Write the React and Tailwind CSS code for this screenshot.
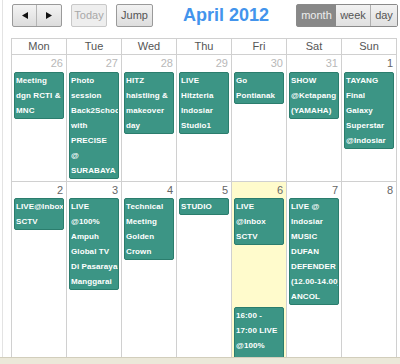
import React from "react";

const DAYS = ["Mon", "Tue", "Wed", "Thu", "Fri", "Sat", "Sun"];

// each event is a list of lines, wrapped the way the calendar shows them
const WEEKS = [
	{
		height: "h-[127px]",
		numH: "h-[17px]",
		cells: [
			{ day: 26, other: true, events: [["Meeting", "dgn RCTI &", "MNC"]] },
			{
				day: 27,
				other: true,
				events: [
					["Photo", "session", "Back2School", "with", "PRECISE", "@", "SURABAYA"],
				],
			},
			{
				day: 28,
				other: true,
				events: [["HITZ", "haistling &", "makeover", "day"]],
			},
			{
				day: 29,
				other: true,
				events: [["LIVE", "Hitzteria", "Indosiar", "Studio1"]],
			},
			{ day: 30, other: true, events: [["Go", "Pontianak"]] },
			{ day: 31, other: true, events: [["SHOW", "@Ketapang", "(YAMAHA)"]] },
			{
				day: 1,
				events: [["TAYANG", "Final", "Galaxy", "Superstar", "@Indosiar"]],
			},
		],
	},
	{
		height: "h-[200px]",
		numH: "h-[16px]",
		cells: [
			{ day: 2, events: [["LIVE@Inbox", "SCTV"]] },
			{
				day: 3,
				events: [
					["LIVE", "@100%", "Ampuh", "Global TV", "Di Pasaraya", "Manggarai"],
				],
			},
			{ day: 4, events: [["Technical", "Meeting", "Golden", "Crown"]] },
			{ day: 5, events: [["STUDIO"]] },
			{
				day: 6,
				today: true,
				events: [
					["LIVE", "@Inbox", "SCTV"],
					["16:00 -", "17:00 LIVE", "@100%", "Ampuh"],
				],
			},
			{
				day: 7,
				events: [
					[
						"LIVE @",
						"Indosiar",
						"MUSIC",
						"DUFAN",
						"DEFENDER",
						"(12.00-14.00)",
						"ANCOL",
					],
				],
			},
			{ day: 8, events: [] },
		],
	},
];

const Event = ({ lines, className = "" }) => (
	<div
		className={`ml-[2px] mr-[2px] border border-[#2b7d6d] bg-[#3c9585] rounded-[2px] pl-[1px] text-white font-bold text-[8px] tracking-[0.1px] leading-[15px] overflow-hidden ${className}`}
	>
		{lines.map((l, i) => (
			<div key={i} className="whitespace-nowrap">
				{l}
			</div>
		))}
	</div>
);

const Arrow = ({ dir }) => (
	<svg width="6" height="7" viewBox="0 0 6 7">
		{dir === "left" ? (
			<polygon points="6,0 6,7 0,3.5" fill="#111" />
		) : (
			<polygon points="0,0 0,7 6,3.5" fill="#111" />
		)}
	</svg>
);

const App = () => {
	return (
		<div className="w-[400px] h-[364px] overflow-hidden bg-white flex flex-col font-['Liberation_Sans',Arial,sans-serif]">
			<div className="flex-1 min-h-0 ml-[2px] border-l border-[#e3e3e3] pl-[8px] overflow-hidden">
				{/* toolbar */}
				<div className="flex items-start mt-[4px] h-[23px]">
					<div className="ml-[1px] flex h-[23px] border border-[#9a9a9a] rounded-[2px] bg-gradient-to-b from-[#f4f4f4] to-[#dcdcdc]">
						<div className="w-[24px] flex items-center justify-center border-r border-[#b4b4b4]">
							<Arrow dir="left" />
						</div>
						<div className="w-[24px] flex items-center justify-center">
							<Arrow dir="right" />
						</div>
					</div>
					<div className="ml-[9px] w-[36px] h-[23px] flex items-center justify-center border border-[#c8c8c8] rounded-[2px] bg-[#eeeeee] text-[11px] text-[#a8a8a8]">
						Today
					</div>
					<div className="ml-[9px] w-[37px] h-[23px] flex items-center justify-center border border-[#9a9a9a] rounded-[2px] bg-gradient-to-b from-[#f2f2f2] to-[#dedede] text-[11px] text-[#555]">
						Jump
					</div>
					<h2 className="ml-[30px] text-[18px] leading-[22px] font-bold text-[#4394ec]">
						April 2012
					</h2>
					<div className="ml-auto mr-[2px] flex h-[23px] border border-[#8a8a8a] rounded-[2px] text-[11px]">
						<div className="w-[39px] flex items-center justify-center bg-[#888888] text-[#eeeeee]">
							month
						</div>
						<div className="w-[35px] flex items-center justify-center bg-gradient-to-b from-[#f2f2f2] to-[#e0e0e0] text-[#555] border-r border-[#b0b0b0]">
							week
						</div>
						<div className="w-[26px] flex items-center justify-center bg-gradient-to-b from-[#f2f2f2] to-[#e0e0e0] text-[#555]">
							day
						</div>
					</div>
				</div>

				{/* calendar grid */}
				<div className="mt-[11px] w-[386px] border-t border-l border-[#d0d0d0]">
					<div className="grid grid-cols-7">
						{DAYS.map((d) => (
							<div
								key={d}
								className="h-[16px] border-r border-b border-[#d0d0d0] text-center text-[11px] leading-[15px] text-[#555]"
							>
								{d}
							</div>
						))}
					</div>
					{WEEKS.map((week, wi) => (
						<div key={wi} className="grid grid-cols-7">
							{week.cells.map((cell) => (
								<div
									key={cell.day}
									className={`${week.height} border-r border-b border-[#d0d0d0] overflow-hidden ${
										cell.today ? "bg-[#fffbcc]" : "bg-white"
									}`}
								>
									<div
										className={`${week.numH} pt-[1px] pr-[3px] text-right text-[11px] leading-[14px] ${
											cell.other ? "text-[#b8b8b8]" : "text-[#666]"
										}`}
									>
										{cell.day}
									</div>
									{cell.events.map((ev, i) => (
										<Event
											key={i}
											lines={ev}
											className={i === 1 ? "mt-[62px]" : ""}
										/>
									))}
								</div>
							))}
						</div>
					))}
				</div>
			</div>
			<div className="h-[7px] shrink-0 border-t border-[#d2cebc] bg-[#ebe8d9]" />
		</div>
	);
};

export default App;
